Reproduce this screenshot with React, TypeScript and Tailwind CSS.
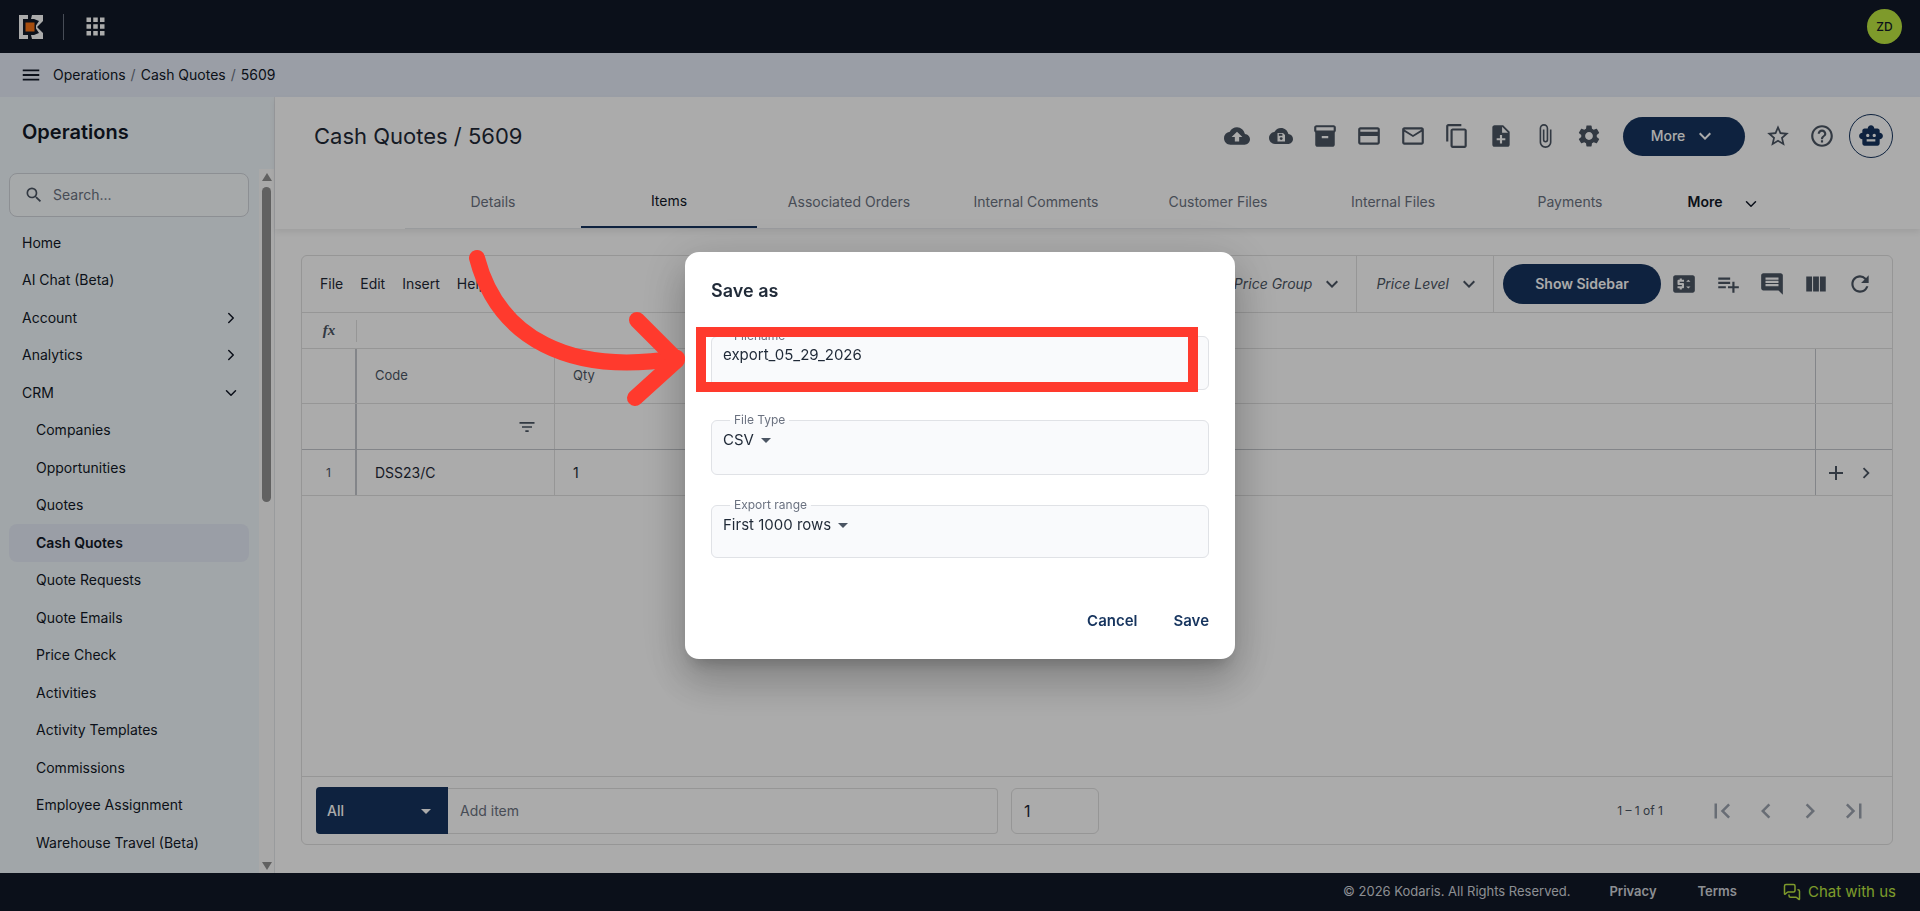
import React from "react";
import {
  MdAdd,
  MdApps,
  MdArrowDropDown,
  MdAttachFile,
  MdChevronLeft,
  MdChevronRight,
  MdCloudUpload,
  MdContentCopy,
  MdFilterList,
  MdFirstPage,
  MdHelpOutline,
  MdInsertComment,
  MdInventory2,
  MdKeyboardArrowDown,
  MdLastPage,
  MdMenu,
  MdNoteAdd,
  MdOutlineCreditCard,
  MdOutlineMail,
  MdPlaylistAdd,
  MdPriceChange,
  MdRefresh,
  MdSearch,
  MdSettings,
  MdSmartToy,
  MdStarBorder,
  MdViewColumn,
} from "react-icons/md";
import { ChevronDown, ChevronRight, MessagesSquare } from "lucide-react";

function Logo() {
  return (
    <svg width="24" height="24" viewBox="0 0 24 24">
      <path d="M0 0h9v4H4v16h5v4H0z" fill="#fff" />
      <path d="M13 0h11v6l-6 6 6 6v6H13l-1-4h3l5-2-4-6 4-6-5-2h-3z" fill="#fff" />
      <rect x="5" y="6" width="12" height="12" fill="#111827" />
      <rect x="6.5" y="7.5" width="9" height="9" fill="#f97316" />
    </svg>
  );
}

function CloudSave() {
  return (
    <svg width="24" height="24" viewBox="0 0 24 24" fill="#4b5563">
      <path d="M19.35 10.04C18.67 6.59 15.64 4 12 4 9.11 4 6.6 5.64 5.35 8.04 2.34 8.36 0 10.91 0 14c0 3.31 2.69 6 6 6h13c2.76 0 5-2.24 5-5 0-2.64-2.05-4.78-4.65-4.96z" />
      <path d="M8.5 9h5.5l2 2v6.5H8.5z" fill="#fff" />
      <rect x="9.8" y="9.8" width="3.6" height="2" />
      <circle cx="12.2" cy="14.6" r="1.4" />
    </svg>
  );
}

const actionIcons = [
  <MdCloudUpload size={26} />,
  <CloudSave />,
  <MdInventory2 size={26} />,
  <MdOutlineCreditCard size={26} />,
  <MdOutlineMail size={26} />,
  <MdContentCopy size={26} />,
  <MdNoteAdd size={26} />,
  <MdAttachFile size={26} />,
  <MdSettings size={26} />,
];

const tabs = [
  { label: "Details", width: "w-[176px]" },
  { label: "Items", width: "w-[176px]" },
  { label: "Associated Orders", width: "w-[184px]" },
  { label: "Internal Comments", width: "w-[190px]" },
  { label: "Customer Files", width: "w-[174px]" },
  { label: "Internal Files", width: "w-[176px]" },
  { label: "Payments", width: "w-[178px]" },
];

function NavItem({
  label,
  sub,
  active,
  arrow,
}: {
  label: string;
  sub?: boolean;
  active?: boolean;
  arrow?: "right" | "down";
}) {
  return (
    <div
      className={`flex h-[37.5px] items-center justify-between rounded-lg pr-[9px] text-sm text-[#111827] ${
        sub ? "pl-[27px]" : "pl-[13px]"
      } ${active ? "bg-[#e6ecf8] font-semibold" : ""}`}
    >
      <span>{label}</span>
      {arrow === "right" && <ChevronRight size={18} />}
      {arrow === "down" && <ChevronDown size={18} />}
    </div>
  );
}

function Sidebar() {
  return (
    <aside className="flex w-[275px] shrink-0 flex-col border-r border-[#e5e7eb] bg-[#f1f8fc]">
      <div className="flex h-[72px] shrink-0 items-start pl-[22px] pt-[21px] text-xl font-semibold leading-7 text-[#111827]">
        Operations
      </div>
      <div className="flex min-h-0 flex-1">
        <div className="min-w-0 flex-1 overflow-hidden pl-[9px] pr-[10px] pt-[4px]">
          <div className="mb-[7px] flex h-[44px] items-center gap-[9px] rounded-lg border border-[#d1d5db] bg-white/50 pl-[14px] text-sm text-[#6b7280]">
            <MdSearch size={20} className="text-[#4b5563]" />
            Search...
          </div>
          <NavItem label="Home" />
          <NavItem label="AI Chat (Beta)" />
          <NavItem label="Account" arrow="right" />
          <NavItem label="Analytics" arrow="right" />
          <NavItem label="CRM" arrow="down" />
          <NavItem label="Companies" sub />
          <NavItem label="Opportunities" sub />
          <NavItem label="Quotes" sub />
          <NavItem label="Cash Quotes" sub active />
          <NavItem label="Quote Requests" sub />
          <NavItem label="Quote Emails" sub />
          <NavItem label="Price Check" sub />
          <NavItem label="Activities" sub />
          <NavItem label="Activity Templates" sub />
          <NavItem label="Commissions" sub />
          <NavItem label="Employee Assignment" sub />
          <NavItem label="Warehouse Travel (Beta)" sub />
        </div>
        <div className="flex w-[15px] shrink-0 flex-col items-center bg-[#fdfdfd] px-[3px]">
          <div className="mt-[4px] h-0 w-0 border-x-[5px] border-b-[8px] border-x-transparent border-b-[#919191]" />
          <div className="mt-[6px] h-[315px] w-[9px] rounded-[5px] bg-[#919191]" />
          <div className="mb-[3px] mt-auto h-0 w-0 border-x-[5px] border-t-[8px] border-x-transparent border-t-[#919191]" />
        </div>
      </div>
    </aside>
  );
}

function PageHeader() {
  return (
    <header className="h-[132px] shrink-0 bg-white shadow-[0_3px_6px_rgba(0,0,0,0.08)]">
      <div className="flex h-[78px] items-center justify-between pl-[39px] pr-[27px]">
        <h1 className="text-[22px] font-normal text-[#1f2937]">Cash Quotes / 5609</h1>
        <div className="flex items-center">
          {actionIcons.map((icon, i) => (
            <span key={i} className="flex w-[44px] items-center justify-center text-[#4b5563]">
              {icon}
            </span>
          ))}
          <button className="ml-[12px] flex h-[39px] w-[122px] items-center justify-center gap-[8px] rounded-full bg-[#16345e] text-sm font-medium text-white">
            More
            <MdKeyboardArrowDown size={24} />
          </button>
          <span className="ml-[11px] flex w-[44px] items-center justify-center text-[#4b5563]">
            <MdStarBorder size={26} />
          </span>
          <span className="flex w-[44px] items-center justify-center text-[#4b5563]">
            <MdHelpOutline size={26} />
          </span>
          <span className="ml-[5px] flex h-[44px] w-[44px] items-center justify-center rounded-full border border-[#16345e] text-[#16345e]">
            <MdSmartToy size={26} />
          </span>
        </div>
      </div>
      <div className="ml-[130px] flex h-[54px] w-[1385px] border-b border-[#e5e7eb]">
        {tabs.map((t) => (
          <div
            key={t.label}
            className={`flex items-center justify-center text-sm ${t.width} ${
              t.label === "Items"
                ? "border-b-2 border-[#16345e] text-[#111827]"
                : "text-[#6b7280]"
            }`}
          >
            {t.label}
          </div>
        ))}
        <div className="flex flex-1 items-center justify-center gap-[20px] pr-[1px] text-sm font-semibold text-[#111827]">
          More
          <ChevronDown size={18} className="mt-[4px]" />
        </div>
      </div>
    </header>
  );
}

function Toolbar() {
  return (
    <div className="flex h-[57px] shrink-0 items-center justify-between border-b border-[#e0e0e0] pl-[18px]">
      <div className="flex gap-[17px] text-sm text-[#1f2937]">
        <span>File</span>
        <span>Edit</span>
        <span>Insert</span>
        <span>Help</span>
      </div>
      <div className="flex h-full items-center">
        <div className="flex h-full items-center gap-[8px] border-r border-[#e0e0e0] pr-[12px] text-sm italic text-[#4b5563]">
          Price Group
          <MdKeyboardArrowDown size={24} />
        </div>
        <div className="flex h-full items-center gap-[8px] border-r border-[#e0e0e0] pl-[19px] pr-[12px] text-sm italic text-[#4b5563]">
          Price Level
          <MdKeyboardArrowDown size={24} />
        </div>
        <button className="ml-[9px] h-[40px] w-[158px] rounded-[20px] bg-[#16345e] text-sm font-semibold text-white">
          Show Sidebar
        </button>
        <div className="ml-[1px] flex items-center pr-[10px] text-[#4b5563]">
          <span className="flex w-[44px] justify-center"><MdPriceChange size={26} /></span>
          <span className="flex w-[44px] justify-center"><MdPlaylistAdd size={26} /></span>
          <span className="flex w-[44px] justify-center"><MdInsertComment size={26} /></span>
          <span className="flex w-[44px] justify-center"><MdViewColumn size={26} /></span>
          <span className="flex w-[44px] justify-center"><MdRefresh size={26} /></span>
        </div>
      </div>
    </div>
  );
}

function Grid() {
  return (
    <div className="shrink-0 text-[#1f2937]">
      <div className="flex h-[36px] items-center border-b border-[#e0e0e0]">
        <span className="flex h-[22px] w-[55px] items-center justify-center border-r border-[#e0e0e0] font-['Liberation_Serif',serif] text-[15px] font-semibold italic text-[#4b5563]">
          fx
        </span>
      </div>
      <div className="flex h-[55px] border-b border-[#e0e0e0] text-[13px] text-[#4b5563]">
        <div className="w-[55px] border-r-2 border-[#c4c7cc]" />
        <div className="flex w-[198px] items-center border-r border-[#e0e0e0] pl-[18px]">Code</div>
        <div className="flex flex-1 items-center pl-[18px]">Qty</div>
        <div className="w-[77px] border-l border-[#c4c7cc]" />
      </div>
      <div className="flex h-[46px] border-b border-[#c4c7cc] text-[#4b5563]">
        <div className="w-[55px] border-r-2 border-[#c4c7cc]" />
        <div className="flex w-[198px] items-center justify-end border-r border-[#e0e0e0] pr-[17px]">
          <MdFilterList size={20} />
        </div>
        <div className="flex-1" />
        <div className="w-[77px] border-l border-[#c4c7cc]" />
      </div>
      <div className="flex h-[46px] border-b border-[#e0e0e0] text-sm">
        <div className="flex w-[55px] items-center justify-center border-r-2 border-[#c4c7cc] text-xs text-[#4b5563]">1</div>
        <div className="flex w-[198px] items-center border-r border-[#e0e0e0] pl-[18px]">DSS23/C</div>
        <div className="flex flex-1 items-center pl-[18px]">1</div>
        <div className="flex w-[77px] items-center gap-[7px] border-l border-[#c4c7cc] pl-[8px] text-[#4b5563]">
          <MdAdd size={24} />
          <MdChevronRight size={22} />
        </div>
      </div>
    </div>
  );
}

function GridFooter() {
  return (
    <div className="flex h-[68px] shrink-0 items-center border-t border-[#e0e0e0] pl-[14px] pr-[16px]">
      <div className="flex h-[47px] w-[132px] items-center justify-between rounded-l bg-[#16345e] pl-[11px] pr-[10px] text-sm font-medium text-white">
        All
        <MdArrowDropDown size={24} />
      </div>
      <div className="flex h-[46px] w-[550px] items-center rounded-r border border-l-0 border-[#e0e0e0] pl-[12px] text-sm text-[#6b7280]">
        Add item
      </div>
      <div className="ml-[13px] flex h-[46px] w-[88px] items-center rounded-md border border-[#e0e0e0] pl-[12px] text-base text-[#1f2937]">
        1
      </div>
      <span className="ml-auto mr-[37px] text-xs text-[#4b5563]">1 – 1 of 1</span>
      <div className="flex text-[#9ca3af]">
        <span className="flex w-[44px] justify-center"><MdFirstPage size={30} /></span>
        <span className="flex w-[44px] justify-center"><MdChevronLeft size={30} /></span>
        <span className="flex w-[44px] justify-center"><MdChevronRight size={30} /></span>
        <span className="flex w-[44px] justify-center"><MdLastPage size={30} /></span>
      </div>
    </div>
  );
}

function Field({
  label,
  value,
  select,
  className,
}: {
  label: string;
  value: string;
  select?: boolean;
  className: string;
}) {
  return (
    <fieldset
      className={`flex w-[498px] items-center justify-between rounded-md border border-[#e0e2e6] bg-[#f9fafc] pl-[11px] pr-[8px] ${className}`}
    >
      <legend className="ml-[7px] px-[4px] text-xs text-[#6b7280]">{label}</legend>
      <div className="flex items-center justify-between pr-[8px]">
        <span className="text-[15px] text-[#1f2937]">{value}</span>
        {select && <MdArrowDropDown size={24} className="text-[#4b5563]" />}
      </div>
    </fieldset>
  );
}

function SaveDialog() {
  return (
    <div className="h-[407px] w-[550px] rounded-[14px] bg-white pl-[26px] pr-[26px] pt-[26px] shadow-[0_11px_15px_-7px_rgba(0,0,0,0.2),0_24px_38px_3px_rgba(0,0,0,0.14),0_9px_46px_8px_rgba(0,0,0,0.12)]">
      <h2 className="text-lg font-semibold leading-[26px] text-[#1f2937]">Save as</h2>
      <div className="mt-[24px] flex flex-col gap-[22px]">
        <Field label="Filename" value="export_05_29_2026" className="h-[62px]" />
        <Field label="File Type" value="CSV" select className="h-[63px]" />
        <Field label="Export range" value="First 1000 rows" select className="h-[61px]" />
      </div>
      <div className="mt-[52px] flex justify-end gap-[36px] text-[15px] font-semibold text-[#16345e]">
        <span>Cancel</span>
        <span>Save</span>
      </div>
    </div>
  );
}

export default function App() {
  return (
    <div className="relative flex h-screen flex-col overflow-hidden bg-white font-['Inter',sans-serif]">
      <div className="flex h-[53px] shrink-0 items-center justify-between bg-[#111827] pl-[19px] pr-[18px]">
        <div className="flex items-center">
          <Logo />
          <div className="ml-[20px] h-[26px] w-px bg-[#6b7280]" />
          <MdApps size={27} className="ml-[18px] text-white" />
        </div>
        <div className="flex h-[35px] w-[35px] items-center justify-center rounded-full bg-[#bce641] text-xs font-medium text-[#111827]">
          ZD
        </div>
      </div>

      <div className="flex h-[44px] shrink-0 items-center gap-[11px] bg-[#e6ecf8] pl-[20px] text-sm text-[#111827]">
        <MdMenu size={22} />
        <div className="flex gap-[5px]">
          <span>Operations</span>
          <span className="text-[#6b7280]">/</span>
          <span>Cash Quotes</span>
          <span className="text-[#6b7280]">/</span>
          <span>5609</span>
        </div>
      </div>

      <div className="flex min-h-0 flex-1">
        <Sidebar />
        <main className="flex min-w-0 flex-1 flex-col">
          <PageHeader />
          <div className="min-h-0 flex-1 pb-[28px] pl-[26px] pr-[27px] pt-[26px]">
            <div className="flex h-full flex-col rounded-md border border-[#e0e0e0]">
              <Toolbar />
              <Grid />
              <div className="flex-1" />
              <GridFooter />
            </div>
          </div>
        </main>
      </div>

      <footer className="flex h-[38px] shrink-0 items-center justify-end bg-[#111827] pr-[24px] text-[13px] text-[#d1d5db]">
        <span>© 2026 Kodaris. All Rights Reserved.</span>
        <span className="ml-[39px] font-semibold">Privacy</span>
        <span className="ml-[41px] font-semibold">Terms</span>
        <span className="ml-[46px] flex items-center gap-[7px] text-[15px] text-[#bce641]">
          <MessagesSquare size={18} />
          Chat with us
        </span>
      </footer>

      <div className="fixed inset-0 flex items-center justify-center bg-black/33">
        <SaveDialog />
      </div>

      <svg className="pointer-events-none fixed left-0 top-0" width="1920" height="911">
        <path
          d="M477 258C498 338 570 376 677 358"
          fill="none"
          stroke="#ff3a2d"
          strokeWidth="16"
          strokeLinecap="round"
        />
        <path
          d="M637 320L677 360L635 398"
          fill="none"
          stroke="#ff3a2d"
          strokeWidth="16"
          strokeLinecap="round"
          strokeLinejoin="round"
        />
      </svg>
      <div className="pointer-events-none fixed left-[696px] top-[327px] h-[65px] w-[502px] border-[10px] border-[#ff3a2d]" />
    </div>
  );
}
